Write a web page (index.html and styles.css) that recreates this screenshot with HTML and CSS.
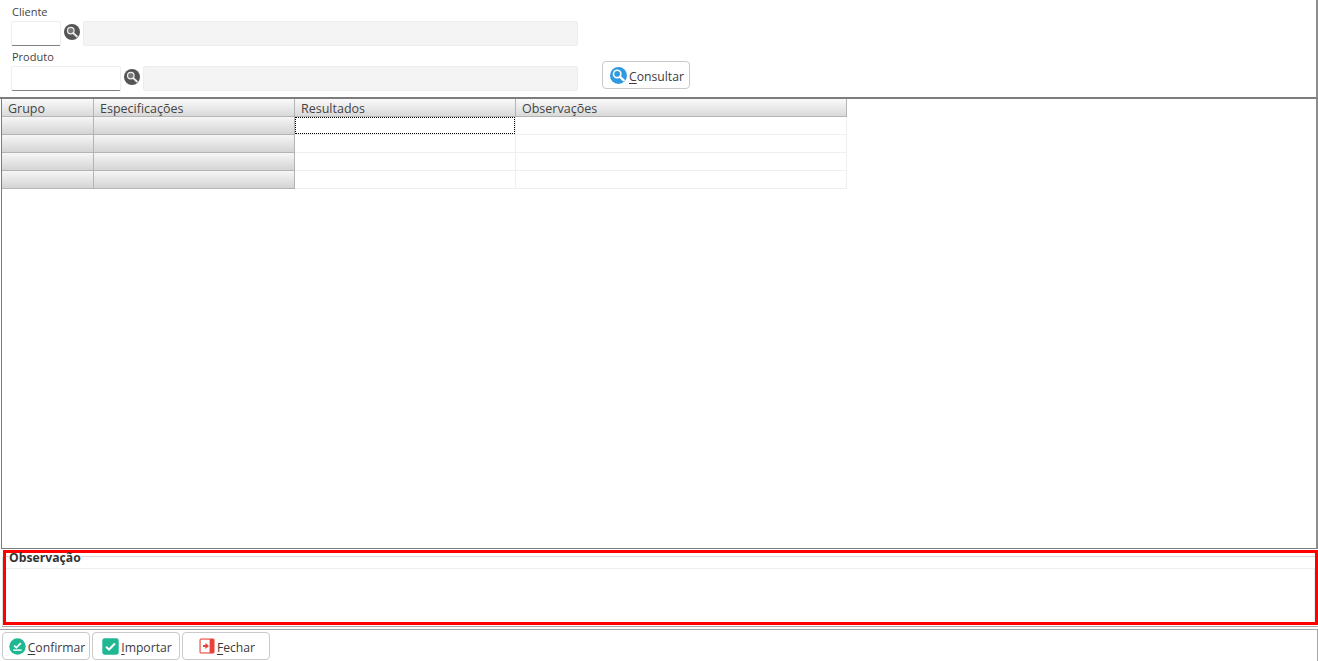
FILE: index.html
```html
<!DOCTYPE html>
<html lang="pt">
<head>
<meta charset="utf-8">
<title>Consulta</title>
<link rel="stylesheet" href="styles.css">
</head>
<body>
<div class="app">
  <header class="filters">
    <div class="fields">
      <label class="field-label">Cliente</label>
      <div class="field-row">
        <div class="input input-short"></div>
        <svg class="lookup" viewBox="0 0 16 16"><circle cx="8" cy="8" r="8" fill="#555"/><circle cx="6.8" cy="6.6" r="3.3" fill="#777" stroke="#eee" stroke-width="1.2"/><path d="M9.3 9.1l3.6 3.4" stroke="#eee" stroke-width="1.9" stroke-linecap="round"/></svg>
        <div class="readonly readonly-long"></div>
      </div>
      <label class="field-label field-label-second">Produto</label>
      <div class="field-row">
        <div class="input input-long"></div>
        <svg class="lookup" viewBox="0 0 16 16"><circle cx="8" cy="8" r="8" fill="#555"/><circle cx="6.8" cy="6.6" r="3.3" fill="#777" stroke="#eee" stroke-width="1.2"/><path d="M9.3 9.1l3.6 3.4" stroke="#eee" stroke-width="1.9" stroke-linecap="round"/></svg>
        <div class="readonly readonly-short"></div>
      </div>
    </div>
    <button class="btn btn-query">
      <svg class="btn-icon icon-query" viewBox="0 0 18 18"><circle cx="9" cy="9" r="9" fill="#2f9ae0"/><circle cx="7.6" cy="7.4" r="3.9" fill="none" stroke="#fff" stroke-width="1.7"/><path d="M10.6 10.4l4 3.7" stroke="#fff" stroke-width="2.4" stroke-linecap="round"/></svg>
      <span class="btn-text"><u>C</u>onsultar</span>
    </button>
  </header>

  <main class="grid-panel">
    <div class="grid">
      <div class="head">Grupo</div><div class="head">Especificações</div><div class="head">Resultados</div><div class="head">Observações</div>
      <div class="fixed"></div><div class="fixed"></div><div class="cell"><div class="focus-mark"></div></div><div class="cell"></div>
      <div class="fixed"></div><div class="fixed"></div><div class="cell"></div><div class="cell"></div>
      <div class="fixed"></div><div class="fixed"></div><div class="cell"></div><div class="cell"></div>
      <div class="fixed"></div><div class="fixed"></div><div class="cell"></div><div class="cell"></div>
    </div>
  </main>

  <section class="notes">
    <div class="notes-inner">
      <div class="notes-title"><strong>Observação</strong></div>
      <div class="notes-box"></div>
    </div>
  </section>

  <footer class="actions">
    <button class="btn">
      <svg class="btn-icon" viewBox="0 0 18 18"><circle cx="9" cy="9" r="8.7" fill="#1fb893"/><path d="M5.4 8l2.4 2.2 4.8-4.8" fill="none" stroke="#fff" stroke-width="1.7"/><path d="M4.6 12.8h8.8" stroke="#fff" stroke-width="1.5"/></svg>
      <span class="btn-text"><u>C</u>onfirmar</span>
    </button>
    <button class="btn">
      <svg class="btn-icon" viewBox="0 0 18 18"><rect x="0.3" y="0.3" width="17.4" height="17.4" rx="2.5" fill="#1fb893"/><path d="M4.2 9.2l3.3 3 6.2-6.4" fill="none" stroke="#fff" stroke-width="2.1"/></svg>
      <span class="btn-text"><u>I</u>mportar</span>
    </button>
    <button class="btn">
      <svg class="btn-icon icon-exit" viewBox="0 0 16 16"><rect x="0.5" y="0.5" width="15" height="15" rx="1.5" fill="#e9423a"/><rect x="1.6" y="1.6" width="9" height="12.8" fill="#fff"/><path d="M4 8h4" stroke="#e9423a" stroke-width="2"/><path d="M6.4 5l3.6 3-3.6 3z" fill="#e9423a"/></svg>
      <span class="btn-text"><u>F</u>echar</span>
    </button>
  </footer>
</div>
</body>
</html>
```
FILE: styles.css
```css
* { box-sizing: border-box; }
html, body { margin: 0; padding: 0; background: #fff; }
body { font-family: "Open Sans", "Noto Sans", sans-serif; color: #3c3c3c; overflow: hidden; }
.app { width: 1318px; height: 661px; display: flex; flex-direction: column; }

.filters { height: 99px; flex: none; padding: 5px 0 0 11px; display: flex; align-items: flex-start; border-right: 2px solid #8c8c8c; border-bottom: 2px solid #7d7d7d; }
.fields { width: 567px; }
.field-label { display: block; height: 16px; padding-left: 1px; font-size: 11px; line-height: 14px; color: #444; }
.field-label-second { height: 20px; padding-top: 3px; line-height: 15px; }
.field-row { display: flex; align-items: flex-start; height: 25px; }
.input { height: 25px; border: 1px solid #eeeeee; border-bottom: 1px solid #808080; border-radius: 2px; background: #fff; }
.input-short { width: 50px; }
.input-long { width: 110px; }
.lookup { width: 16px; height: 16px; margin: 3px 3px 0 3px; flex: none; }
.readonly { height: 25px; background: #f4f4f4; border: 1px solid #ededed; border-radius: 2px; }
.readonly-long { width: 495px; }
.readonly-short { width: 435px; }

.btn { height: 28px; width: 88px; padding: 0 0 0 2px; display: flex; align-items: center; justify-content: center; gap: 2px; background: #fff; border: 1px solid #c9c9c9; border-radius: 4px; font-family: inherit; font-size: 12.2px; color: #3c3c3c; }
.btn-query { margin: 56px 0 0 24px; }
.btn-text { margin-top: 2px; }
.btn-icon { width: 17px; height: 17px; flex: none; }
.icon-exit { width: 16px; height: 16px; }
u { text-underline-offset: 2px; }

.grid-panel { height: 450px; flex: none; margin-left: 1px; border-left: 1px solid #7d7d7d; border-right: 2px solid #8c8c8c; border-bottom: 1px solid #7d7d7d; }
.grid { display: grid; width: 845px; grid-template-columns: 92px 201px 221px 331px; grid-auto-rows: 18px; }
.head { padding: 1px 0 0 6px; font-size: 12.5px; line-height: 18px; color: #444; background: linear-gradient(#fafafa, #d9d9d9); border-right: 1px solid #b4b4b4; border-bottom: 1px solid #b4b4b4; }
.fixed { background: linear-gradient(#f6f6f6, #d4d4d4); border-right: 1px solid #b4b4b4; border-bottom: 1px solid #b4b4b4; }
.cell { border-right: 1px solid #efefef; border-bottom: 1px solid #efefef; }
.focus-mark { height: 100%; border: 1px dotted #000; }

.notes { height: 78px; flex: none; margin-left: 2px; padding: 1px 0 0 1px; border-bottom: 1px solid #a8a8a8; background: linear-gradient(#dcdcdc, #dcdcdc) left 8px / 1px 100% no-repeat; }
.notes-inner { height: 75px; border: 3px solid #f00; display: flex; flex-direction: column; }
.notes-title { height: 15px; font-size: 12.2px; line-height: 10px; color: #333; padding: 0 0 0 3px; background: linear-gradient(transparent 3px, #dcdcdc 3px, #dcdcdc 4px, transparent 4px); }
.notes-title strong { display: inline-block; height: 10px; background: #fff; }
.notes-box { flex: 1; border-top: 1px solid #eeeeee; border-right: 1px solid #eeeeee; }

.actions { flex: 1; margin-top: 2px; display: flex; gap: 2px; padding: 2px 0 0 2px; border-top: 1px solid #a8a8a8; border-right: 1px solid #a8a8a8; }
```
